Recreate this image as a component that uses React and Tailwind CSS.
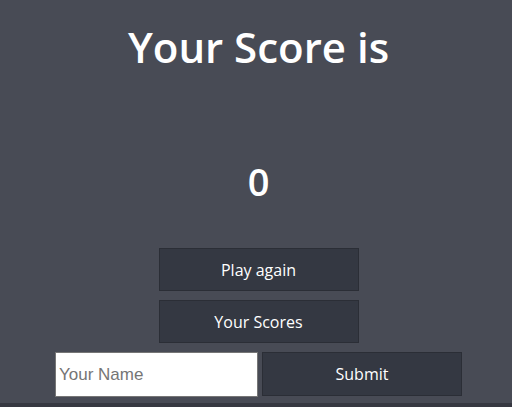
export default function App() {
  return (
    <div className="w-[512px] h-[407px] pl-[5px] bg-[#484b55] flex flex-col items-center overflow-hidden" style={{ fontFamily: '"Open Sans", sans-serif' }}>
      <h1 className="mt-[21px] text-[42px] leading-[52px] font-semibold text-white">Your Score is</h1>
      <div className="mt-[82px] text-[38px] leading-[52px] font-semibold text-white">0</div>
      <div className="mt-[41px] flex flex-col items-center gap-[9px]">
        <button className="w-[200px] h-[43px] bg-[#343842] border border-[#2b2e36] text-white text-[16px] font-medium">Play again</button>
        <button className="w-[200px] h-[43px] bg-[#343842] border border-[#2b2e36] text-white text-[16px] font-medium">Your Scores</button>
      </div>
      <div className="mt-[9px] flex gap-[4px]">
        <input
          placeholder="Your Name"
          className="w-[203px] h-[45px] bg-white border border-[#767676] px-[3px] text-[17px] placeholder:text-[#757575]"
          style={{ fontFamily: '"Liberation Sans", Arial, sans-serif' }}
        />
        <button className="w-[200px] h-[44px] bg-[#343842] border border-[#2b2e36] text-white text-[16px] font-medium">Submit</button>
      </div>
      <div className="mt-auto -ml-[5px] w-[512px] h-[4px] bg-[#363841]" />
    </div>
  )
}
